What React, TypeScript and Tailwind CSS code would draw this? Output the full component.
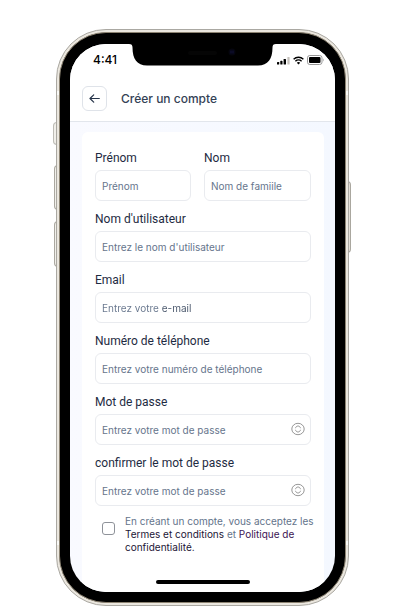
import type { InputHTMLAttributes, ReactNode } from "react";

const INPUT =
  "h-[31px] w-full min-w-0 rounded-md border border-[#e9ebef] bg-white px-1.5 text-[10px] text-[#334155] outline-none placeholder:text-[#66758c] placeholder:opacity-100";

type FieldProps = InputHTMLAttributes<HTMLInputElement> & {
  id: string;
  label: string;
  inputClass?: string;
  icon?: ReactNode;
};

function Field({ id, label, inputClass = INPUT, icon, ...props }: FieldProps) {
  return (
    <div className="min-w-0">
      <label htmlFor={id} className="mb-1 block font-[Roboto,sans-serif] text-xs/4 text-[#1e2b42]">
        {label}
      </label>
      <div className="relative">
        <input id={id} className={inputClass} {...props} />
        {icon}
      </div>
    </div>
  );
}

function RevealButton() {
  return (
    <button type="button" aria-label="Afficher le mot de passe" className="absolute top-2 right-1.5">
      <svg width="14" height="14" viewBox="0 0 14 14" fill="none" stroke="#8b8b8b" strokeWidth="0.9">
        <ellipse cx="7" cy="7" rx="6.200" ry="5.700" />
        <path d="M4.500 6.200C4.800 4.800 5.800 4 7 4s2.200.8 2.500 2.200M4.500 7.800C4.800 9.200 5.800 10 7 10s2.200-.8 2.500-2.200" />
      </svg>
    </button>
  );
}

function StatusBar() {
  return (
    <div className="relative flex h-8 items-center justify-between pr-[11px] pl-[23px]">
      <span className="text-xs font-medium text-black">4:41</span>
      <svg className="absolute top-0 left-[59px]" width="147" height="22" viewBox="0 0 147 22">
        <path d="M0 0h147c-2.500 0-3.500 1-3.500 3.500C143.500 15 139 21.500 129 21.500H18C8 21.500 3.500 15 3.500 3.500 3.500 1 2.500 0 0 0Z" fill="#000" />
        <rect x="59" y="7" width="29" height="4" rx="2" fill="#050505" />
        <circle cx="103" cy="8" r="3.500" fill="#05050f" />
        <path d="M102 6.500v3M104 6.500v3" stroke="#12123c" />
      </svg>
      <div className="flex items-center gap-[3px]">
        <svg width="13" height="9" viewBox="0 0 13 9">
          <rect x="0" y="6" width="2.200" height="2.500" rx=".6" />
          <rect x="3.300" y="4.800" width="2.200" height="3.700" rx=".6" />
          <rect x="6.600" y="3" width="2.400" height="5.500" rx=".6" />
          <rect x="10.400" y="1" width="2.200" height="7.500" rx=".6" fill="#c4c0bb" />
        </svg>
        <svg width="11" height="9" viewBox="0 0 11 9" fill="none" stroke="#000" strokeWidth="1.400">
          <path d="M.6 3.300a7 7 0 0 1 9.800 0M2.400 5.300a4.400 4.400 0 0 1 6.200 0" />
          <path d="M3.800 6.800a2.500 2.500 0 0 1 3.400 0L5.500 8.600Z" fill="#000" stroke="none" />
        </svg>
        <svg width="17" height="10" viewBox="0 0 17 10">
          <rect x=".5" y=".5" width="14.500" height="9" rx="2.300" fill="#fff" stroke="#979797" />
          <rect x="2" y="2" width="11.500" height="6" rx="1" />
          <path d="M16 3.500q1.300 1.500 0 3Z" fill="#999" />
        </svg>
      </div>
    </div>
  );
}

function SignUpForm() {
  return (
    <form className="rounded-t-md bg-white px-[13px] pt-[18px] pb-[26px]">
      <div className="flex flex-col gap-2.5">
        <div className="grid grid-cols-[96fr_107fr] gap-[13px]">
          <Field id="prenom" label="Prénom" placeholder="Prénom" />
          <Field id="nom" label="Nom" placeholder="Nom de famiile" />
        </div>
        <Field id="utilisateur" label="Nom d'utilisateur" placeholder="Entrez le nom d'utilisateur" />
        <Field
          id="email"
          label="Email"
          type="email"
          placeholder="Entrez votre e-mail"
          inputClass="h-[31px] w-full min-w-0 rounded-md border border-[#e9ebef] bg-white px-1.5 text-[10px] text-[#334155] outline-none placeholder:bg-[linear-gradient(90deg,#66758c_60px,#465469_60px)] placeholder:bg-clip-text placeholder:text-transparent placeholder:opacity-100"
        />
        <Field
          id="telephone"
          label="Numéro de téléphone"
          type="tel"
          placeholder="Entrez votre numéro de téléphone"
        />
        <Field
          id="motdepasse"
          label="Mot de passe"
          type="password"
          placeholder="Entrez votre mot de passe"
          icon={<RevealButton />}
        />
        <Field
          id="confirmer"
          label="confirmer le mot de passe"
          type="password"
          placeholder="Entrez votre mot de passe"
          icon={<RevealButton />}
        />
      </div>
      <div className="mt-[9px] flex items-start gap-2.5 pl-[7px]">
        <input
          id="conditions"
          type="checkbox"
          className="mt-[7px] size-[13px] shrink-0 appearance-none rounded-[3px] border border-[#8e9299] bg-white checked:bg-[#2b3950]"
        />
        <label htmlFor="conditions" className="text-[10px]/[13px] whitespace-nowrap text-[#64748b]">
          En créant un compte, vous acceptez les
          <br />
          <a href="#termes" className="text-[#1c1536]">Termes et conditions</a> et{" "}
          <a href="#politique" className="text-[#3d1453]">Politique de</a>
          <br />
          <a href="#politique" className="text-[#1c1536]">confidentialité.</a>
        </label>
      </div>
    </form>
  );
}

export default function App() {
  return (
    <main className="bg-white pt-[29px] pr-[59px] pb-1.5 pl-14 font-['Inter',sans-serif]">
      <div className="relative">
        {/* Side buttons */}
        <span className="absolute top-[93px] -left-[3px] h-[23px] w-1 rounded-l-sm border border-[#bdbbb5] bg-[#f1efea]" />
        <span className="absolute top-[136px] -left-[2px] h-[45px] w-1 rounded-l-sm border border-[#aaa79f] bg-[#f1efea]" />
        <span className="absolute top-[192px] -left-[2px] h-[46px] w-1 rounded-l-sm border border-[#aaa79f] bg-[#f1efea]" />
        <span className="absolute top-[152px] -right-[2px] h-[72px] w-1 rounded-r-sm border border-[#aaa79f] bg-[#e4dfd7]" />

        {/* Metal frame */}
        <div className="relative rounded-[50px] border border-[#aaa8a2] bg-[#ebe7df] p-0.5">
          <span className="absolute top-[61px] left-0 h-1 w-0.5 bg-[#fafaf8]" />
          <span className="absolute top-[61px] right-0 h-1 w-0.5 bg-[#fafaf8]" />
          <span className="absolute bottom-[60px] left-0 h-1 w-0.5 bg-[#fafaf8]" />
          <span className="absolute right-0 bottom-[60px] h-1 w-0.5 bg-[#fafaf8]" />
          <div className="rounded-[47px] border border-[#8d8473] bg-black px-2.5 pt-[11px] pb-2.5">
            <div className="overflow-hidden rounded-[36px] bg-linear-to-r from-[#f9faff] to-[#f4f8ff]">
              <div className="border-b border-[#e2e6ec] bg-white pb-2.5">
                <StatusBar />
                <header className="mt-2.5 flex items-center gap-3.5 px-3">
                  <button
                    type="button"
                    aria-label="Retour"
                    className="flex size-[25px] items-center justify-center rounded-md border border-[#dfe3e9]"
                  >
                    <svg width="11" height="9" viewBox="0 0 11 9" fill="none" stroke="#263449" strokeWidth="1.200">
                      <path d="M10.300 4.500H1M4.700.8 1 4.500l3.700 3.700" strokeLinecap="round" strokeLinejoin="round" />
                    </svg>
                  </button>
                  <h1 className="text-xs font-medium text-[#334155]">Créer un compte</h1>
                </header>
              </div>
              <div className="pt-2.5 pr-[11px] pl-3">
                <SignUpForm />
                <div className="flex justify-center bg-white pb-2">
                  <div className="h-1 w-[94px] rounded-full bg-black" />
                </div>
              </div>
            </div>
          </div>
        </div>
      </div>
    </main>
  );
}
